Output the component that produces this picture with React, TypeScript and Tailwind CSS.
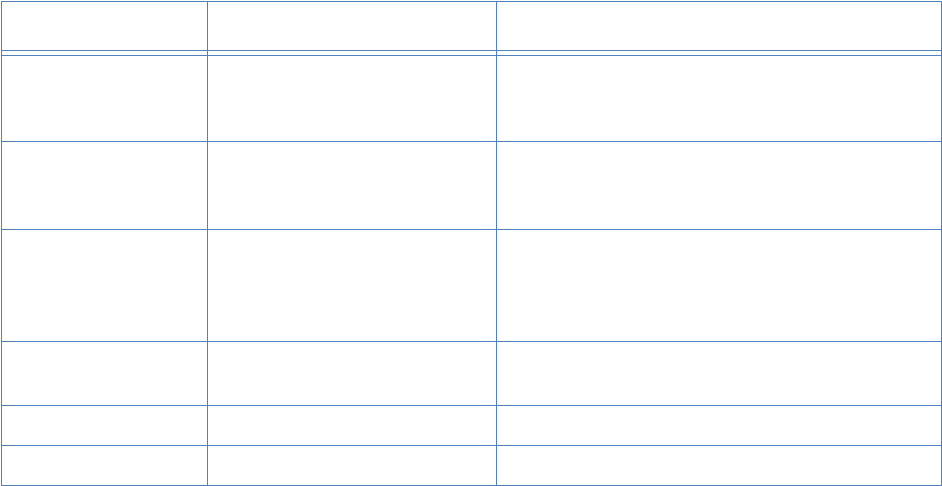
import React from "react";

const Row = ({ h, last }: { h: string; last?: boolean }) => (
  <div className={`flex ${h} ${last ? "" : "border-b border-[#4f81bd]"}`}>
    <div className="w-[206px] shrink-0 border-r border-[#4f81bd]" />
    <div className="w-[289px] shrink-0 border-r border-[#4f81bd]" />
    <div className="flex-1" />
  </div>
);

export default function App() {
  return (
    <div className="w-[942px] h-[486px] bg-white pt-[1px] pl-[1px]" style={{ fontFamily: '"Liberation Sans", sans-serif' }}>
      <div className="w-[941px] border border-[#4f81bd] flex flex-col">
        <Row h="h-[49px]" />
        <Row h="h-[5px]" />
        <Row h="h-[86px]" />
        <Row h="h-[88px]" />
        <Row h="h-[112px]" />
        <Row h="h-[64px]" />
        <Row h="h-[40px]" />
        <Row h="h-[39px]" last />
      </div>
    </div>
  );
}
